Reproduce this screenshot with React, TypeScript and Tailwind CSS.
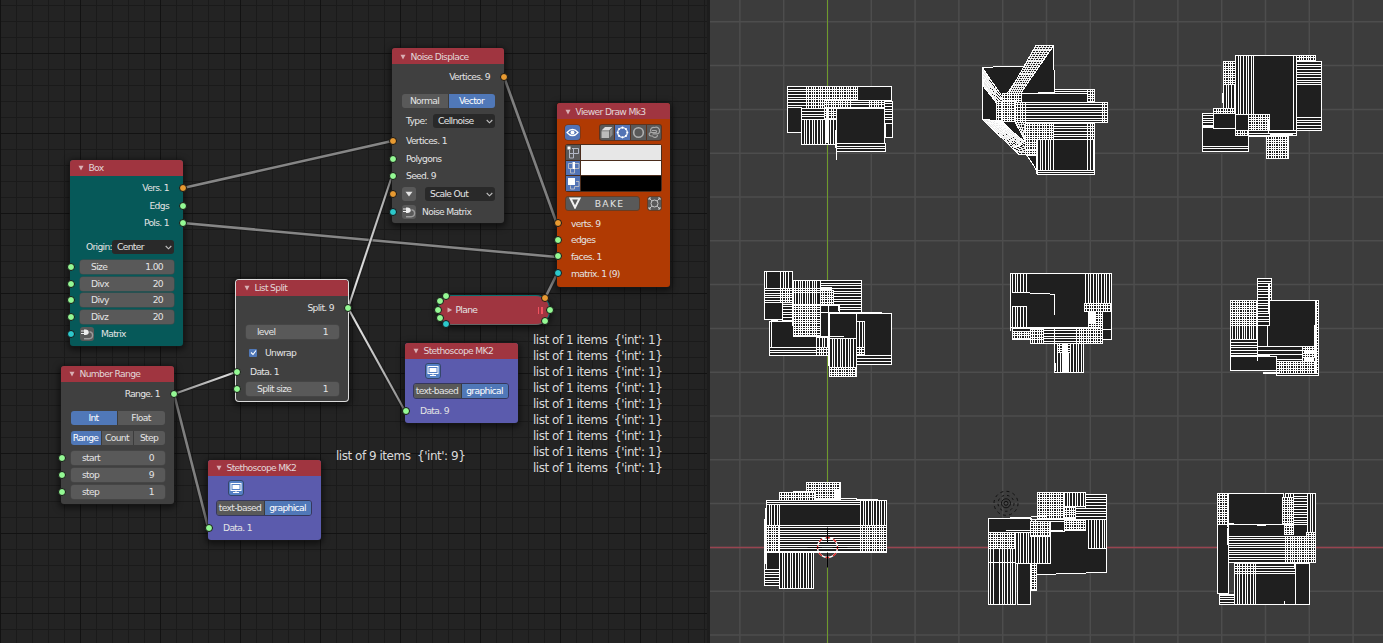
import React from "react";

type Tone = "green" | "orange" | "cyan";

const TONES: Record<Tone, string> = {
  green: "bg-[#94f994]",
  orange: "bg-[#e89a31]",
  cyan: "bg-[#2cc8cb]",
};

function Dot({ tone, className = "" }: { tone: Tone; className?: string }) {
  return <span className={`absolute size-[8px] rounded-full border border-[#151515] ${TONES[tone]} ${className}`} />;
}

function Row({
  className = "",
  left,
  right,
  children,
}: {
  className?: string;
  left?: Tone;
  right?: Tone;
  children?: React.ReactNode;
}) {
  return (
    <div className={`relative flex shrink-0 items-center pr-[9px] pl-[10px] ${className}`}>
      {left && <Dot tone={left} className="top-1/2 -left-[3.5px] -translate-y-1/2" />}
      {children}
      {right && <Dot tone={right} className="top-1/2 -right-[4px] -translate-y-1/2" />}
    </div>
  );
}

function Node({
  title,
  place,
  body = "bg-[#404040]",
  head = "",
  ring = "shadow-[0_0_0_0.5px_#1a1a1a,0_2px_6px_2px_rgba(0,0,0,0.55)]",
  children,
}: {
  title: string;
  place: string;
  body?: string;
  head?: string;
  ring?: string;
  children: React.ReactNode;
}) {
  return (
    <section className={`absolute flex flex-col rounded-[3px] ${body} ${ring} ${place}`}>
      <header className={`flex h-4 shrink-0 items-center rounded-t-[3px] bg-[#a03540] pl-2 ${head}`}>
        <svg width="6" height="6" viewBox="0 0 6 6" className="mr-[4.5px] shrink-0">
          <path d="M0.500 0.800h5L3 5.600z" fill="#d9b0b4" />
        </svg>
        <span className="text-[#e2d6d7]">{title}</span>
      </header>
      {children}
    </section>
  );
}

function Out({ text, tone, className }: { text: string; tone: Tone; className: string }) {
  return (
    <Row right={tone} className={`justify-end ${className}`}>
      <span className="pr-[5px]">{text}</span>
    </Row>
  );
}

function In({ text, tone, className }: { text: string; tone: Tone; className: string }) {
  return (
    <Row left={tone} className={className}>
      <span className="pl-[4px]">{text}</span>
    </Row>
  );
}

function Field({ name, value, socket = true, className = "" }: { name: string; value: string; socket?: boolean; className?: string }) {
  return (
    <Row left={socket ? "green" : undefined} className={`h-[17px] ${className}`}>
      <div className="flex h-[14px] flex-1 items-center justify-between rounded-[3px] bg-[#595959] px-[11px] shadow-[0_0_0_0.5px_#4a4a4a]">
        <span>{name}</span>
        <span>{value}</span>
      </div>
    </Row>
  );
}

function Tabs({ items, active, className = "" }: { items: [string, string][]; active: number; className?: string }) {
  return (
    <div className={`flex h-[14px] overflow-hidden rounded-[3px] ${className}`}>
      {items.map(([label, width], i) => (
        <span
          key={label}
          className={`flex items-center justify-center pr-px ${width} ${i > 0 ? "border-l border-[#3c3c3c]" : ""} ${
            i === active ? "bg-[#5078b8] text-white" : "bg-[#595959]"
          }`}
        >
          {label}
        </span>
      ))}
    </div>
  );
}

function Select({ label, className }: { label: string; className: string }) {
  return (
    <div className={`flex h-[14px] items-center justify-between rounded-[3px] bg-[#292929] pr-[2px] pl-[5px] ${className}`}>
      <span>{label}</span>
      <svg width="7" height="5" viewBox="0 0 7 5">
        <path d="M0.700 1l2.800 2.800L6.300 1" fill="none" stroke="#c0c0c0" strokeWidth="1.100" />
      </svg>
    </div>
  );
}

function PlugButton() {
  return (
    <span className="flex size-[14px] items-center justify-center rounded-[3px] bg-[#595959]">
      <svg width="14" height="14" viewBox="0 0 14 14">
        <path d="M4 2.500h1.500c2 0 3.200 1 3.200 2.800S7.500 8 5.500 8H4z" fill="#ededed" />
        <path d="M1 4h3M1 6.500h3" stroke="#ededed" strokeWidth="1.200" />
        <path d="M9.500 4.800c2.200 0.200 3.100 1.600 3.100 3.300 0 2.100-1.300 3.600-3.400 3.600H4" fill="none" stroke="#9a9a9a" strokeWidth="1.400" />
      </svg>
    </span>
  );
}

function Stethoscope({ place, data }: { place: string; data: string }) {
  return (
    <Node title="Stethoscope MK2" place={`h-[80px] w-[113px] ${place}`} body="bg-[#5b5bad]">
      <div className="mt-[4px] ml-[20px] flex size-4 items-center justify-center rounded-[3px] border border-[#35466b] bg-[#5580c4]">
        <svg width="12" height="12" viewBox="0 0 12 12">
          <rect x="1" y="1.500" width="10" height="7" fill="none" stroke="#fff" />
          <rect x="2.500" y="3" width="7" height="4" fill="#fff" />
          <path d="M6 8v2M3 10.500h6" stroke="#fff" />
        </svg>
      </div>
      <Tabs
        className="mt-[4px] ml-[8px] !h-[16px] w-[96px] border border-[#35375c]"
        items={[
          ["text-based", "w-[47px]"],
          ["graphical", "flex-1"],
        ]}
        active={1}
      />
      <In text={data} tone="green" className="mt-[3px] h-[17px] !pl-[11px]" />
    </Node>
  );
}

const CELL = "flex size-[15px] shrink-0 items-center justify-center";

function Viewer() {
  return (
    <Node title="Viewer Draw Mk3" head="pt-[2px]" place="left-[557px] top-[103px] h-[184px] w-[113px]" body="bg-[#b03a03]">
      <div className="mt-[6px] flex justify-between pr-[8px] pl-[8px]">
        <span className={`${CELL} rounded-[3px] bg-[#5273b5] shadow-[0_0_0_0.5px_#5c3420]`}>
          <svg width="13" height="11" viewBox="0 0 13 11">
            <path d="M1 5.500Q6.500-0.800 12 5.500Q6.500 11.800 1 5.500z" fill="none" stroke="#fff" strokeWidth="1.200" />
            <circle cx="6.500" cy="5.500" r="2" fill="#fff" />
          </svg>
        </span>
        <div className="-mt-px flex gap-px rounded-[3px] bg-[#5c3420] p-px">
          <span className={`${CELL} !w-[14px] rounded-l-[2px] bg-[#595959]`}>
            <svg width="12" height="13" viewBox="0 0 12 13">
              <path d="M0.500 4.500L4 1h7.500L8 4.500z" fill="#ddd" />
              <path d="M0.500 5.200H8V12H0.500z" fill="#bbb" />
              <path d="M8.700 4.800l2.800-3v7L8.700 12z" fill="#888" />
            </svg>
          </span>
          <span className={`${CELL} bg-[#5273b5]`}>
            <svg width="13" height="13" viewBox="0 0 13 13">
              <circle cx="6.500" cy="6.500" r="4.800" fill="none" stroke="#e6ecf8" strokeWidth="1.200" />
              <g fill="#fff">
                <circle cx="6.500" cy="1.700" r="1.100" />
                <circle cx="6.500" cy="11.300" r="1.100" />
                <circle cx="1.700" cy="6.500" r="1.100" />
                <circle cx="11.300" cy="6.500" r="1.100" />
                <circle cx="3.100" cy="3.100" r="1.100" />
                <circle cx="9.900" cy="3.100" r="1.100" />
                <circle cx="3.100" cy="9.900" r="1.100" />
                <circle cx="9.900" cy="9.900" r="1.100" />
              </g>
            </svg>
          </span>
          <span className={`${CELL} bg-[#595959]`}>
            <svg width="13" height="13" viewBox="0 0 13 13">
              <circle cx="6.500" cy="6.500" r="4.800" fill="none" stroke="#b0b0b0" strokeWidth="1.600" />
            </svg>
          </span>
          <span className={`${CELL} !w-[14px] rounded-r-[2px] bg-[#595959]`}>
            <svg width="13" height="13" viewBox="0 0 13 13" fill="none" stroke="#a8a8a8" strokeWidth="1.200">
              <path d="M3 6C1.500 3 4 1 6.500 1.500c3-1 5.500 1 5 4-.3 2-2 2.500-3.500 2.300H4.500" />
              <path d="M4 4.500h3.500c1.500 0 1.500 2 0 2H3c-2.500 0-2.500 3.500 0 3.500h1.500c1.500 2.500 5 1.500 5-1" />
            </svg>
          </span>
        </div>
      </div>
      <div className="mt-[3px] mr-[8px] ml-[8px] flex flex-col gap-px overflow-hidden rounded-[3px] bg-[#4a2c1c] p-px">
        {[
          { cell: "bg-[#595959]", swatch: "bg-[#e7e7e7]" },
          { cell: "bg-[#5273b5]", swatch: "bg-white" },
          { cell: "bg-[#5273b5]", swatch: "bg-black" },
        ].map(({ cell, swatch }, i) => (
          <div key={i} className="flex h-[14.6px] gap-px">
            <span className={`flex w-[14px] items-center justify-center ${cell}`}>
              <svg width="13" height="13" viewBox="0 0 13 13" fill="none" stroke="#b4b9c6" strokeWidth="1">
                {i === 0 && <path d="M2.500 4v8h4V7.500h-4M6.500 7.500h5v-5H5M6.500 2.500v5" />}
                {i === 1 && <path d="M5 2.500H1.500v5h4M3.500 7.500V12h4V8M8 2.500h4v5H8" />}
                {i === 2 && <path d="M3.500 8.500V12h4V9.500M9 4.500h3v5H7.500" />}
                {i === 0 && <rect x="0.500" y="0.500" width="3" height="3" fill="#fff" stroke="none" />}
                {i === 1 && <rect x="5.500" y="1" width="2.500" height="7" fill="#fff" stroke="none" />}
                {i === 2 && <rect x="1" y="1" width="7" height="7" fill="#fff" stroke="none" />}
              </svg>
            </span>
            <span className={`flex-1 ${swatch}`} />
          </div>
        ))}
      </div>
      <div className="mt-[4px] mr-[8px] ml-[8px] flex justify-between">
        <span className="flex h-[15px] w-[75px] items-center rounded-[3px] border border-[#6a3c22] bg-[#595959] pl-[3px]">
          <svg width="12" height="12" viewBox="0 0 12 12">
            <path d="M1.500 1.500h9L6 10.500z" fill="none" stroke="#f0f0f0" strokeWidth="2" />
          </svg>
          <span className="flex-1 pr-px text-center tracking-[1.300px]">BAKE</span>
        </span>
        <span className="flex size-[15px] items-center justify-center rounded-[3px] border border-[#6a3c22] bg-[#595959]">
          <svg width="13" height="13" viewBox="0 0 13 13" fill="none" stroke="#c8c8c8" strokeWidth="1">
            <circle cx="6.500" cy="6.500" r="3.500" />
            <path d="M1 1l2.800 2.800M12 1L9.200 3.800M1 12l2.800-2.800M12 12L9.200 9.200M1 3V1h2M10 1h2v2M1 10v2h2M10 12h2v-2" />
          </svg>
        </span>
      </div>
      <In text="verts. 9" tone="orange" className="mt-[4px] h-[17px]" />
      <In text="edges" tone="green" className="h-[16px]" />
      <In text="faces. 1" tone="green" className="h-[17px]" />
      <In text="matrix. 1 (9)" tone="cyan" className="h-[17px]" />
    </Node>
  );
}

const PLANE_SOCKETS: [Tone, string][] = [
  ["green", "left-[4px] -top-[3px]"],
  ["green", "-left-[2px] top-[2px]"],
  ["green", "-left-[4px] top-[11px]"],
  ["green", "-left-[2px] top-[19px]"],
  ["cyan", "left-[4px] top-[25px]"],
  ["orange", "left-[103px] -top-px"],
  ["green", "left-[108px] top-[11px]"],
  ["green", "left-[103px] top-[22px]"],
];

function PlaneNode() {
  return (
    <section className="absolute top-[295px] left-[437.5px] h-[30px] w-[112px]">
      <div className="flex h-full items-center rounded-[14px] border border-[#0b6f70] border-b-[#666] bg-[#a03540] pl-[8px] shadow-[0_2px_6px_2px_rgba(0,0,0,0.55)]">
        <svg width="6" height="6" viewBox="0 0 6 6" className="mr-[3px]">
          <path d="M0.500 0.500v5L5.200 3z" fill="#d9b0b4" />
        </svg>
        <span>Plane</span>
        <span className="mr-[6px] ml-auto flex gap-[2px]">
          <i className="h-[7px] w-[1.500px] bg-[#f0525f]" />
          <i className="h-[7px] w-[1.500px] bg-[#f0525f]" />
        </span>
      </div>
      {PLANE_SOCKETS.map(([tone, at], i) => (
        <Dot key={i} tone={tone} className={at} />
      ))}
    </section>
  );
}

const LINKS: [number, number, number, number, string][] = [
  [183, 188, 392, 141, "#868686"],
  [183, 223, 557, 257, "#868686"],
  [504, 77, 557, 224, "#808080"],
  [545, 298, 557, 274, "#808080"],
  [348, 308, 392, 176, "url(#fromSel)"],
  [348, 308, 405, 411, "url(#fromSel)"],
  [174, 394, 236, 372, "url(#toSel)"],
  [174, 394, 208, 527, "#808080"],
];

function Links() {
  return (
    <svg className="absolute inset-0" width="710" height="643">
      <defs>
        <linearGradient id="fromSel" gradientUnits="userSpaceOnUse" x1="348" y1="308" x2="405" y2="308">
          <stop offset="0" stopColor="#f4f4f4" />
          <stop offset="1" stopColor="#8c8c8c" />
        </linearGradient>
        <linearGradient id="toSel" gradientUnits="userSpaceOnUse" x1="174" y1="394" x2="236" y2="394">
          <stop offset="0" stopColor="#8c8c8c" />
          <stop offset="1" stopColor="#e8e8e8" />
        </linearGradient>
      </defs>
      {LINKS.map(([x1, y1, x2, y2, c], i) => (
        <g key={i}>
          <line x1={x1} y1={y1} x2={x2} y2={y2} stroke="#161616" strokeOpacity="0.5" strokeWidth="4.500" />
          <line x1={x1} y1={y1} x2={x2} y2={y2} stroke={c} strokeWidth={c.startsWith("url") ? 2.100 : 2.600} />
        </g>
      ))}
    </svg>
  );
}

function NodeGrid() {
  const xs = Array.from({ length: 45 }, (_, i) => i * 16);
  const ys = Array.from({ length: 41 }, (_, i) => 5 + i * 16);
  return (
    <svg className="absolute inset-0" width="707" height="643" shapeRendering="crispEdges">
      {xs.map((x, i) => i % 5 !== 0 && <rect key={`x${x}`} x={x} width="1" height="643" fill="#1a1a1a" />)}
      {ys.map((y, i) => i % 5 !== 3 && <rect key={`y${y}`} y={y} width="707" height="1" fill="#1a1a1a" />)}
      {xs.map((x, i) => i % 5 === 0 && <rect key={`X${x}`} x={x} width="1" height="643" fill="#121212" />)}
      {ys.map((y, i) => i % 5 === 3 && <rect key={`Y${y}`} y={y} width="707" height="1" fill="#121212" />)}
    </svg>
  );
}

/* x0, y0, x1, y1, spacing of vertical wires, spacing of horizontal wires; in thirds of a pixel */
type Patch = [number, number, number, number, number?, number?];
type Quad = { p: [number, number][]; n: number; m: number };
type Mesh = { ox: number; oy: number; patches: Patch[]; quads?: Quad[]; solid?: Patch[]; wires?: string };

const MESHES: Mesh[] = [
  {
    ox: 750, oy: 30,
    patches: [
      [112, 169, 423, 210], [112, 169, 323, 234, 0, 8], [169, 169, 323, 234, 7, 8], [112, 231, 155, 306],
      [400, 213, 428, 280, 0, 8], [406, 280, 428, 322], [154, 236, 230, 268, 0, 8], [154, 268, 258, 343, 8, 0],
      [222, 210, 300, 236, 7, 7], [300, 210, 358, 236, 0, 7], [358, 210, 402, 236, 7, 7], [222, 236, 258, 268, 7, 7],
      [258, 236, 402, 340], [258, 340, 406, 365, 0, 8],
    ],
    solid: [[228, 236, 237, 343], [256, 300, 261, 355], [259, 343, 264, 391], [402, 236, 405, 296]],
  },
  {
    ox: 750, oy: 30,
    patches: [
      [914, 178, 1034, 190, 0, 6], [815, 190, 1015, 217], [1013, 178, 1034, 217, 7, 7], [757, 190, 815, 217, 7, 7],
      [740, 213, 754, 271, 6, 7], [757, 213, 796, 275, 7, 7], [796, 216, 1073, 277, 0, 8], [796, 216, 826, 277, 7, 8],
      [1056, 216, 1073, 277, 7, 8], [825, 280, 862, 361, 7, 7], [825, 361, 860, 373, 7, 6],
      [862, 280, 910, 328, 7, 7], [910, 280, 1034, 328, 0, 8], [862, 328, 910, 433, 8, 0], [910, 328, 1013, 421],
      [1013, 280, 1034, 328, 7, 8], [1013, 328, 1034, 433, 8, 0], [862, 421, 1034, 433, 0, 6],
    ],
    quads: [
      { p: [[698, 112], [828, 108], [757, 212], [740, 190]], n: 0, m: 0 },
      { p: [[697, 113], [745, 215], [742, 271], [697, 269]], n: 0, m: 0 },
      { p: [[697, 113], [757, 200], [742, 222], [697, 165]], n: 20, m: 5 },
      { p: [[910, 48], [914, 187], [840, 190], [812, 190]], n: 0, m: 0 },
      { p: [[858, 46], [910, 46], [812, 190], [776, 190]], n: 6, m: 26 },
      { p: [[757, 275], [800, 275], [825, 330], [825, 342]], n: 0, m: 0 },
      { p: [[796, 277], [830, 277], [830, 345], [824, 330]], n: 4, m: 8 },
      { p: [[697, 268], [752, 275], [830, 340], [806, 373]], n: 7, m: 40 },
      { p: [[806, 373], [790, 355], [835, 335], [860, 373]], n: 5, m: 5 },
      { p: [[830, 375], [860, 375], [865, 433], [850, 405]], n: 0, m: 0 },
    ],
    solid: [[757, 210, 760, 275], [860, 328, 863, 433]],
  },
  {
    ox: 1180, oy: 30,
    patches: [
      [130, 94, 166, 162, 7, 7], [130, 162, 166, 236, 8, 0], [221, 76, 350, 302], [166, 76, 221, 254, 8, 0],
      [341, 76, 350, 302], [350, 76, 407, 94, 7, 7], [350, 94, 425, 162, 0, 8], [350, 162, 425, 262],
      [350, 262, 425, 302, 0, 8], [67, 250, 101, 290, 0, 7], [101, 236, 162, 250, 7, 7], [67, 292, 206, 350],
      [101, 250, 165, 294], [67, 350, 206, 365, 0, 6], [166, 254, 206, 302], [206, 254, 268, 302, 7, 7],
      [166, 302, 206, 315, 7, 7], [206, 302, 350, 315, 0, 7], [259, 320, 326, 385, 7, 7],
    ],
    solid: [[206, 315, 260, 322], [270, 314, 340, 320], [127, 190, 130, 220], [183, 252, 240, 257], [350, 91, 384, 97], [266, 270, 270, 314]],
  },
  {
    ox: 750, oy: 255,
    patches: [
      [43, 49, 50, 100], [50, 49, 91, 100], [91, 49, 126, 100, 8, 0], [43, 100, 91, 143, 0, 7],
      [91, 100, 130, 143, 7, 7], [97, 147, 130, 195, 0, 8], [43, 143, 97, 193], [210, 76, 334, 172, 0, 8],
      [130, 76, 210, 106, 7, 0], [130, 100, 210, 113, 7, 6], [130, 113, 210, 147, 7, 0], [210, 106, 249, 147, 7, 7],
      [58, 198, 65, 300], [65, 198, 202, 277], [58, 277, 200, 300, 0, 8], [200, 248, 238, 277, 8, 0],
      [200, 277, 238, 300, 7, 7], [130, 150, 210, 245, 7, 7], [210, 150, 268, 172], [210, 172, 237, 245],
      [237, 175, 320, 250], [320, 175, 425, 300], [320, 198, 342, 277, 8, 0], [320, 277, 342, 302, 7, 7],
      [320, 302, 425, 328, 0, 8], [238, 250, 320, 337, 8, 0], [238, 337, 320, 364, 7, 7],
    ],
    solid: [[215, 96, 248, 108], [63, 193, 86, 200], [282, 172, 396, 176], [235, 150, 238, 335], [157, 245, 285, 250], [266, 150, 273, 170], [127, 76, 130, 215]],
  },
  {
    ox: 750, oy: 255,
    patches: [
      [782, 55, 1085, 217], [787, 55, 830, 112, 8, 0], [1006, 55, 1085, 145, 8, 0], [1003, 145, 1085, 168, 7, 7],
      [1058, 168, 1085, 222], [1058, 222, 1085, 253], [1016, 170, 1058, 222, 7, 7], [787, 153, 830, 217, 8, 0],
      [787, 219, 840, 228], [787, 228, 840, 253, 7, 7], [840, 219, 1058, 265, 0, 8], [840, 222, 880, 265, 7, 8],
      [980, 219, 1058, 265, 7, 8], [914, 265, 1001, 352, 8, 0], [922, 265, 960, 293, 7, 7],
    ],
    solid: [[1016, 168, 1040, 207], [938, 265, 956, 352], [912, 217, 916, 326], [782, 55, 786, 230], [784, 216, 1056, 220], [914, 326, 922, 350]],
    wires: "M787 112H840V115H900V118H914V180",
  },
  {
    ox: 1180, oy: 255,
    patches: [
      [151, 136, 232, 212, 7, 7], [151, 212, 232, 254, 7, 0], [151, 254, 232, 300, 0, 8],
      [232, 136, 415, 273], [232, 70, 275, 136, 0, 8], [232, 136, 268, 210, 0, 8], [232, 210, 263, 273],
      [232, 273, 368, 318, 0, 13], [368, 273, 406, 318, 7, 7], [290, 318, 406, 354, 7, 7], [151, 303, 290, 346],
      [290, 354, 415, 360], [406, 136, 415, 354, 4, 8],
    ],
    solid: [[265, 88, 271, 178], [404, 212, 410, 310], [372, 290, 404, 296], [372, 306, 404, 318], [210, 300, 272, 305], [225, 346, 290, 351], [250, 351, 300, 358], [231, 273, 234, 318]],
  },
  {
    ox: 750, oy: 470,
    patches: [
      [169, 37, 272, 88, 7, 7], [88, 68, 192, 91, 7, 7], [49, 91, 410, 104, 0, 6], [88, 104, 331, 166],
      [49, 104, 88, 166, 8, 0], [331, 91, 410, 166, 8, 0], [88, 166, 331, 248, 0, 7], [49, 166, 88, 248, 7, 7],
      [331, 166, 410, 248, 7, 7], [49, 248, 88, 298], [43, 298, 88, 346, 0, 8], [88, 248, 191, 355, 8, 0],
    ],
    solid: [[43, 147, 49, 206], [43, 206, 46, 346], [46, 116, 50, 284], [192, 84, 322, 89], [257, 60, 272, 88], [320, 88, 386, 92], [130, 64, 170, 70]],
  },
  {
    ox: 750, oy: 470,
    quads: [{ p: [[855, 150], [1070, 147], [1070, 307], [860, 314]], n: 0, m: 0 }],
    patches: [
      [862, 67, 943, 145, 7, 7], [943, 67, 1007, 110, 8, 0], [1007, 73, 1070, 115, 0, 8],
      [943, 113, 975, 145, 7, 7], [975, 115, 1070, 147, 0, 8], [715, 145, 845, 187], [715, 187, 796, 235, 7, 7],
      [715, 235, 729, 403, 6, 0], [729, 235, 748, 403], [748, 235, 796, 403, 8, 0], [796, 187, 845, 280, 8, 0],
      [803, 280, 842, 403], [842, 153, 902, 200, 7, 7], [845, 200, 902, 280, 8, 0], [845, 280, 860, 361, 7, 7],
      [902, 153, 943, 183], [943, 150, 1007, 182, 7, 7], [1016, 147, 1070, 235, 8, 0],
    ],
    solid: [[715, 276, 796, 279], [796, 190, 800, 400], [803, 280, 807, 320], [842, 324, 846, 380], [902, 181, 943, 187], [845, 138, 890, 143], [768, 182, 842, 186], [781, 141, 845, 145], [842, 147, 885, 152]],
  },
  {
    ox: 1180, oy: 470,
    patches: [
      [112, 70, 142, 162, 7, 7], [112, 162, 145, 370], [145, 70, 310, 163], [316, 70, 340, 85, 8, 0],
      [307, 83, 340, 166, 7, 7], [340, 70, 382, 166, 0, 8], [382, 70, 407, 187, 8, 0], [145, 163, 382, 198],
      [313, 166, 341, 194, 7, 7], [379, 187, 407, 198, 7, 7], [145, 198, 407, 277, 0, 7], [316, 198, 407, 277, 7, 7],
      [163, 280, 346, 311, 0, 8], [225, 311, 346, 403], [163, 311, 225, 403, 8, 0], [163, 280, 225, 311, 8, 8],
      [346, 280, 389, 403], [118, 373, 163, 403, 0, 8],
    ],
    solid: [[141, 80, 147, 175], [142, 175, 145, 227], [145, 159, 165, 165], [231, 162, 258, 168], [163, 277, 393, 284], [342, 280, 348, 298], [312, 393, 315, 403], [118, 372, 163, 378]],
  },
];

const px = (v: number) => Math.floor(v / 3);

function hatch([x0, y0, x1, y1, sv = 0, sh = 0]: Patch) {
  const X0 = px(x0), Y0 = px(y0), X1 = px(x1), Y1 = px(y1);
  let d = `M${X0} ${Y0}H${X1 + 1}V${Y1 + 1}H${X0}zM${X0 + 1} ${Y0 + 1}V${Y1}H${X1}V${Y0 + 1}z`;
  if (sv) for (let x = x0 + sv; x < x1 - 3; x += sv) d += `M${px(x)} ${Y0}h1V${Y1}h-1z`;
  if (sh) for (let y = y0 + sh; y < y1 - 3; y += sh) d += `M${X0} ${px(y)}H${X1}v1H${X0}z`;
  return d;
}

function quadWires({ p, n, m }: Quad) {
  const [a, b, c, e] = p.map(([x, y]) => [x / 3, y / 3]);
  const mix = (u: number[], v: number[], t: number) => `${(u[0] + (v[0] - u[0]) * t).toFixed(1)} ${(u[1] + (v[1] - u[1]) * t).toFixed(1)}`;
  let d = "";
  for (let i = 0; i <= n && n; i++) d += `M${mix(a, b, i / n)}L${mix(e, c, i / n)}`;
  for (let i = 0; i <= m && m; i++) d += `M${mix(a, e, i / m)}L${mix(b, c, i / m)}`;
  return d;
}

function MeshShape({ mesh }: { mesh: Mesh }) {
  return (
    <g transform={`translate(${mesh.ox} ${mesh.oy})`} shapeRendering="crispEdges">
      {mesh.quads?.map((q, i) => (
        <g key={i}>
          <polygon points={q.p.map(([x, y]) => `${x / 3},${y / 3}`).join(" ")} fill="#1f1f1f" stroke="#fff" strokeWidth="1" />
          <path d={quadWires(q)} stroke="#fff" strokeWidth="0.9" fill="none" />
        </g>
      ))}
      {mesh.patches.map((p, i) => (
        <g key={i}>
          <rect x={px(p[0])} y={px(p[1])} width={px(p[2]) - px(p[0]) + 1} height={px(p[3]) - px(p[1]) + 1} fill="#1f1f1f" />
          <path d={hatch(p)} fill="#fff" />
        </g>
      ))}
      {mesh.solid?.map(([x0, y0, x1, y1], i) => (
        <rect key={i} x={px(x0)} y={px(y0)} width={Math.max(1, px(x1 - x0))} height={Math.max(1, px(y1 - y0))} fill="#fff" />
      ))}
      {mesh.wires && <path d={mesh.wires} transform="scale(0.33333)" fill="none" stroke="#fff" strokeWidth="3" />}
    </g>
  );
}

function Viewport() {
  const step = 43.8;
  return (
    <main className="h-full flex-1 bg-[#3c3c3c]">
      <svg width="673" height="643" viewBox="710 0 673 643" className="block">
        {Array.from({ length: 15 }, (_, i) => 827.5 + (i - 2) * step).map((x) => (
          <line key={x} x1={x} x2={x} y1="0" y2="643" stroke="#4d4d4d" strokeWidth="1.500" />
        ))}
        {Array.from({ length: 15 }, (_, i) => 547.4 + (i - 12) * step).map((y) => (
          <line key={y} x1="710" x2="1383" y1={y} y2={y} stroke="#4d4d4d" strokeWidth="1.500" />
        ))}
        <rect x="827" y="0" width="1" height="643" fill="#6f9a2c" />
        <line x1="710" x2="1383" y1="547.5" y2="547.5" stroke="#984450" strokeWidth="1.300" />
        {MESHES.map((mesh, i) => (
          <MeshShape key={i} mesh={mesh} />
        ))}
        <g fill="none" stroke="#111">
          <circle cx="1006" cy="503.300" r="2" />
          <circle cx="1006" cy="503.300" r="4.500" />
          <circle cx="1006" cy="503.300" r="8" strokeDasharray="2.500 3" />
          <circle cx="1006" cy="503.300" r="12" strokeDasharray="3 3.300" />
        </g>
        <g fill="none">
          <circle cx="827.500" cy="547.500" r="10" stroke="#fff" strokeWidth="1.300" />
          <circle cx="827.500" cy="547.500" r="10" stroke="#e02020" strokeWidth="1.300" strokeDasharray="3.930" strokeDashoffset="2" />
          <path d="M807.500 547.500h14.500M832.500 547.500h15M827.500 527.500v14.500M827.500 552.500v15" stroke="#000" strokeWidth="1" />
        </g>
      </svg>
    </main>
  );
}

export default function App() {
  return (
    <div className="flex h-[643px] w-[1383px] overflow-hidden bg-[#232323] font-['DejaVu_Sans',sans-serif] text-[9.2px] leading-none tracking-[-0.68px] whitespace-nowrap text-[#e4e4e4]">
      <div className="relative h-full w-[710px] shrink-0 overflow-hidden border-r-[3px] border-[#1d1d1d]">
        <NodeGrid />
        <Links />

        <Node title="Box" place="left-[70px] top-[160px] h-[186px] w-[113px]" body="bg-[#065959]">
          <Out text="Vers. 1" tone="orange" className="mt-[3px] h-[18px]" />
          <Out text="Edgs" tone="green" className="h-[18px]" />
          <Out text="Pols. 1" tone="green" className="h-[16px]" />
          <Row className="mt-[8px] h-4 justify-end">
            <span>Origin:</span>
            <Select label="Center" className="w-[62px]" />
          </Row>
          <Field name="Size" value="1.00" className="mt-[3px]" />
          <Field name="Divx" value="20" />
          <Field name="Divy" value="20" className="!h-[16px]" />
          <Field name="Divz" value="20" />
          <Row left="cyan" className="h-[18px]">
            <PlugButton />
            <span className="pl-[7px]">Matrix</span>
          </Row>
        </Node>

        <Node title="Number Range" place="left-[61px] top-[366px] h-[138px] w-[113px]">
          <Out text="Range. 1" tone="green" className="mt-[3px] h-[18px]" />
          <Row className="mt-[8px] h-[14px]">
            <Tabs className="w-full" items={[["Int", "w-[46px]"], ["Float", "flex-1"]]} active={0} />
          </Row>
          <Row className="mt-[6px] mb-[4px] h-[14px]">
            <Tabs className="w-full" items={[["Range", "w-[30px]"], ["Count", "w-[32px]"], ["Step", "flex-1"]]} active={0} />
          </Row>
          <Field name="start" value="0" />
          <Field name="stop" value="9" />
          <Field name="step" value="1" />
        </Node>

        <Node
          title="List Split"
          place="left-[236px] top-[280px] h-[121px] w-[112px]"
          ring="shadow-[0_0_0_1px_#dcdcdc,0_2px_6px_3px_rgba(0,0,0,0.55)]"
        >
          <Out text="Split. 9" tone="green" className="mt-[3px] h-[18px]" />
          <Field name="level" value="1" socket={false} className="mt-[6px]" />
          <Row className="mt-[4px] h-[17px]">
            <span className="ml-[3px] flex size-[8px] items-center justify-center rounded-[1px] bg-[#5078b8]">
              <svg width="7" height="7" viewBox="0 0 7 7">
                <path d="M1 3.500L3 5.500 6 1.500" fill="none" stroke="#fff" strokeWidth="1.100" />
              </svg>
            </span>
            <span className="pl-[8px]">Unwrap</span>
          </Row>
          <In text="Data. 1" tone="green" className="mt-[2px] h-[17px]" />
          <Field name="Split size" value="1" />
        </Node>

        <Node title="Noise Displace" head="pt-[2px]" place="left-[392px] top-[48px] h-[175px] w-[112px]">
          <Out text="Vertices. 9" tone="orange" className="mt-[4px] h-[18px]" />
          <Row className="mt-[8px] h-[14px]">
            <Tabs className="w-full" items={[["Normal", "w-[46px]"], ["Vector", "flex-1"]]} active={1} />
          </Row>
          <Row className="mt-[6px] h-[14px] justify-between">
            <span className="pl-[4px]">Type:</span>
            <Select label="Cellnoise" className="w-[62px]" />
          </Row>
          <In text="Vertices. 1" tone="orange" className="mt-[4px] h-[17px]" />
          <In text="Polygons" tone="green" className="h-[19px]" />
          <In text="Seed. 9" tone="green" className="h-[16px]" />
          <Row left="orange" className="mt-px h-[18px] justify-between">
            <span className="flex size-[14px] items-center justify-center rounded-[3px] bg-[#595959]">
              <svg width="8" height="6" viewBox="0 0 8 6">
                <path d="M0.500 0.800h7L4 5.500z" fill="#e4e4e4" />
              </svg>
            </span>
            <Select label="Scale Out" className="w-[70px]" />
          </Row>
          <Row left="cyan" className="h-[18px]">
            <PlugButton />
            <span className="pl-[6px]">Noise Matrix</span>
          </Row>
        </Node>

        <Viewer />
        <PlaneNode />
        <Stethoscope place="left-[405px] top-[343px]" data="Data. 9" />
        <Stethoscope place="left-[208px] top-[460px]" data="Data. 1" />

        <ul className="absolute top-[332px] left-[533px] text-[12px] leading-4 tracking-[-0.48px] text-[#dadada]">
          {Array.from({ length: 9 }, (_, i) => (
            <li key={i} className="whitespace-pre">{"list of 1 items  {'int': 1}"}</li>
          ))}
        </ul>
        <p className="absolute top-[448px] left-[336px] text-[12px] leading-4 tracking-[-0.48px] whitespace-pre text-[#dadada]">
          {"list of 9 items  {'int': 9}"}
        </p>
      </div>
      <Viewport />
    </div>
  );
}
